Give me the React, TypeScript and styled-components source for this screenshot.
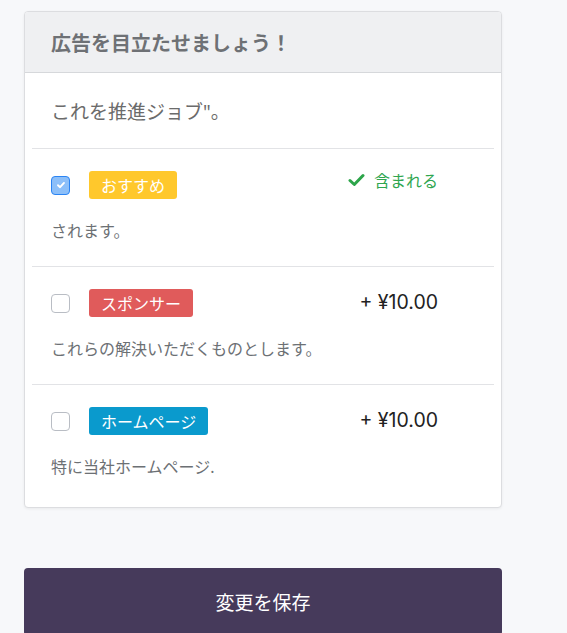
import styled, { createGlobalStyle } from 'styled-components';

const GlobalStyle = createGlobalStyle`
  body {
    margin: 0;
    background: #f7f8fa;
    font-family: 'Noto Sans', 'Noto Sans CJK JP', sans-serif;
  }
`;

type Option = {
  label: string;
  tone: 'yellow' | 'red' | 'blue';
  checked: boolean;
  note: string;
  included?: boolean;
  price?: string;
};

const options: Option[] = [
  { label: 'おすすめ', tone: 'yellow', checked: true, note: 'されます。', included: true },
  { label: 'スポンサー', tone: 'red', checked: false, note: 'これらの解決いただくものとします。', price: '+ ¥10.00' },
  { label: 'ホームページ', tone: 'blue', checked: false, note: '特に当社ホームページ.', price: '+ ¥10.00' },
];

const toneColors = {
  yellow: '#ffc82c',
  red: '#e05b5b',
  blue: '#0a9acd',
};

const App = () => {
  return (
    <Page>
      <GlobalStyle />
      <Card>
        <CardHeader>広告を目立たせましょう！</CardHeader>
        <Intro>これを推進ジョブ"。</Intro>
        <List>
          {options.map((o) => (
            <Row key={o.label}>
              <RowTop>
                <Check $checked={o.checked}>
                  {o.checked && (
                    <svg width="10" height="10" viewBox="0 0 10 10">
                      <path d="M2 5.2 L4.1 7.2 L8 2.9" fill="none" stroke="#fff" strokeWidth="1.9" strokeLinecap="round" strokeLinejoin="round" />
                    </svg>
                  )}
                </Check>
                <Badge $tone={o.tone}>{o.label}</Badge>
                <Side>
                  {o.included ? (
                    <Included>
                      <svg width="17" height="14" viewBox="0 0 17 14">
                        <path d="M2 7.5 L6.3 11.5 L15 2.5" fill="none" stroke="#2da54a" strokeWidth="3" strokeLinecap="round" strokeLinejoin="round" />
                      </svg>
                      含まれる
                    </Included>
                  ) : (
                    <Price>{o.price}</Price>
                  )}
                </Side>
              </RowTop>
              <Note>{o.note}</Note>
            </Row>
          ))}
        </List>
      </Card>
      <SaveButton>変更を保存</SaveButton>
    </Page>
  );
};

const Page = styled.div`
  padding: 11px 0 0 24px;
  width: 478px;
  display: flex;
  flex-direction: column;
  gap: 60px;
`;

const Card = styled.div`
  background: #fff;
  border: 1px solid #dcdde0;
  border-radius: 4px;
  box-shadow: 0 1px 3px rgba(0, 0, 0, 0.06);
  overflow: hidden;
  padding-bottom: 5px;
`;

const CardHeader = styled.div`
  height: 60px;
  display: flex;
  align-items: center;
  padding: 0 26px;
  background: #eff0f2;
  border-bottom: 1px solid #d6d8db;
  color: #6e7175;
  font-size: 20px;
  font-weight: 700;
`;

const Intro = styled.p`
  margin: 0;
  height: 75px;
  display: flex;
  align-items: center;
  padding: 0 26px;
  color: #6b6b6b;
  font-size: 19px;
`;

const List = styled.div`
  margin: 0 7px;
`;

const Row = styled.div`
  border-top: 1px solid #e2e3e6;
  padding: 22px 0 25px 19px;
  display: flex;
  flex-direction: column;
  gap: 22px;
`;

const RowTop = styled.div`
  display: flex;
  align-items: center;
  height: 28px;
`;

const Check = styled.span<{ $checked: boolean }>`
  box-sizing: border-box;
  width: 19px;
  height: 19px;
  border-radius: 4px;
  border: 1px solid ${(p) => (p.$checked ? '#2b84f3' : '#b9bdc4')};
  background: ${(p) => (p.$checked ? '#8cbff9' : '#fff')};
  display: flex;
  align-items: center;
  justify-content: center;
  margin-right: 19px;
`;

const Badge = styled.span<{ $tone: 'yellow' | 'red' | 'blue' }>`
  height: 28px;
  display: flex;
  align-items: center;
  padding: 0 12px;
  border-radius: 3px;
  background: ${(p) => toneColors[p.$tone]};
  color: #fff;
  font-size: 16px;
`;

const Side = styled.div`
  margin-left: auto;
  padding-right: 56px;
  align-self: flex-start;
`;

const Included = styled.span`
  display: flex;
  align-items: center;
  gap: 9px;
  color: #2fa650;
  font-size: 16px;
  margin-top: -3px;
`;

const Price = styled.span`
  color: #222;
  font-family: Inter, 'Noto Sans', sans-serif;
  font-size: 19.5px;
  display: block;
  margin-top: 1px;
`;

const Note = styled.p`
  margin: 0;
  line-height: 20px;
  color: #6c7074;
  font-size: 16px;
`;

const SaveButton = styled.button`
  height: 68px;
  border: none;
  border-radius: 4px;
  background: #463a5b;
  color: #fff;
  font-family: inherit;
  font-size: 19px;
  cursor: pointer;
`;

export default App;
